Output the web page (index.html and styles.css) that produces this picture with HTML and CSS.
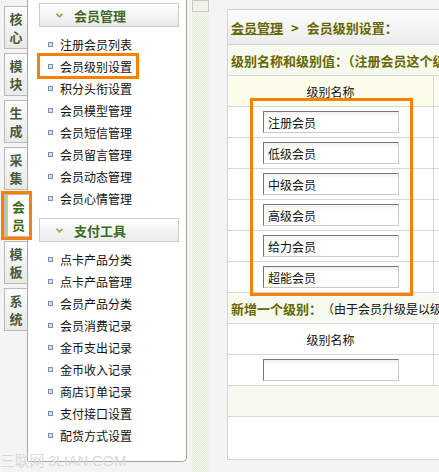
FILE: index.html
```html
<!DOCTYPE html>
<html lang="zh-CN">
<head>
<meta charset="utf-8">
<title>会员级别设置</title>
<link rel="stylesheet" href="styles.css">
</head>
<body>
<div class="page">
  <nav class="tabs">
    <div class="tab">核<br>心</div>
    <div class="tab">模<br>块</div>
    <div class="tab">生<br>成</div>
    <div class="tab">采<br>集</div>
    <div class="tab active">会<br>员</div>
    <div class="tab">模<br>板</div>
    <div class="tab">系<br>统</div>
  </nav>

  <aside class="sidebar">
    <div class="sec-head first"><svg class="chev" width="7" height="5" viewBox="0 0 7 5"><path d="M0.5 0.8 L3.5 3.8 L6.5 0.8" fill="none" stroke="#7fb252" stroke-width="1.6"/></svg>会员管理</div>
    <ul class="menu">
      <li><i></i>注册会员列表</li>
      <li class="hl"><i></i>会员级别设置</li>
      <li><i></i>积分头衔设置</li>
      <li><i></i>会员模型管理</li>
      <li><i></i>会员短信管理</li>
      <li><i></i>会员留言管理</li>
      <li><i></i>会员动态管理</li>
      <li><i></i>会员心情管理</li>
    </ul>
    <div class="sec-head"><svg class="chev" width="7" height="5" viewBox="0 0 7 5"><path d="M0.5 0.8 L3.5 3.8 L6.5 0.8" fill="none" stroke="#7fb252" stroke-width="1.6"/></svg>支付工具</div>
    <ul class="menu">
      <li><i></i>点卡产品分类</li>
      <li><i></i>点卡产品管理</li>
      <li><i></i>会员产品分类</li>
      <li><i></i>会员消费记录</li>
      <li><i></i>金币支出记录</li>
      <li><i></i>金币收入记录</li>
      <li><i></i>商店订单记录</li>
      <li><i></i>支付接口设置</li>
      <li><i></i>配货方式设置</li>
    </ul>
  </aside>

  <div class="splitter">
    <div class="strip"><div class="toggle"></div></div>
  </div>

  <main class="main">
    <div class="crumb"><a href="#">会员管理</a><span class="gt">&gt;</span>会员级别设置：</div>
    <div class="row note"><b>级别名称和级别值：（注册会员这个级别不能删除）</b></div>
    <div class="row thead"><div class="c1">级别名称</div><div class="c2"></div></div>
    <div class="row"><div class="c1"><input class="inp" value="注册会员"></div><div class="c2"></div></div>
    <div class="row"><div class="c1"><input class="inp" value="低级会员"></div><div class="c2"></div></div>
    <div class="row"><div class="c1"><input class="inp" value="中级会员"></div><div class="c2"></div></div>
    <div class="row"><div class="c1"><input class="inp" value="高级会员"></div><div class="c2"></div></div>
    <div class="row"><div class="c1"><input class="inp" value="给力会员"></div><div class="c2"></div></div>
    <div class="row"><div class="c1"><input class="inp" value="超能会员"></div><div class="c2"></div></div>
    <div class="row note"><b>新增一个级别：</b><span class="plain">（由于会员升级是以级别值来判断的）</span></div>
    <div class="row"><div class="c1 lbl">级别名称</div><div class="c2"></div></div>
    <div class="row"><div class="c1"><input class="inp" value=""></div><div class="c2"></div></div>
    <div class="row note"></div>
    <div class="blank"></div>
    <div class="mark"></div>
  </main>
</div>
<div class="watermark">三联网 3LIAN.COM</div>
</body>
</html>
```

FILE: styles.css
```css
html, body {
  margin: 0;
  padding: 0;
  overflow: hidden;
}
body {
  background: #f4f4f4;
  font-family: "Noto Sans CJK SC", "Liberation Sans", sans-serif;
  font-size: 12px;
  color: #111;
  width: 439px;
  height: 472px;
  position: relative;
}
.page {
  display: flex;
  align-items: flex-start;
  width: 700px;
}

/* left vertical tabs */
.tabs {
  width: 27px;
  flex: none;
  padding-top: 6px;
  display: flex;
  flex-direction: column;
  gap: 4px;
}
.tab {
  margin-left: 4px;
  width: 22px;
  height: 41px;
  border: 1px solid #b9b9b9;
  border-right: none;
  background: linear-gradient(#fbfbfb, #e9e9e9);
  color: #4a5838;
  font-weight: bold;
  font-size: 13px;
  line-height: 18px;
  text-align: center;
  display: flex;
  align-items: center;
  justify-content: center;
}
.tab.active {
  position: relative;
  z-index: 2;
  width: 21px;
  margin-right: -1px;
  padding-left: 3px;
  background: linear-gradient(90deg, #b6d48e 0 3px, #ffffff 3px);
  color: #3a6a16;
  outline: 3px solid #ff8000;
}

/* sidebar */
.sidebar {
  width: 158px;
  height: 461px;
  flex: none;
  background: #fff;
  border-left: 1px solid #a9a9a9;
  border-right: 1px solid #a3a392;
  border-bottom: 1px solid #a3a392;
  border-bottom-right-radius: 5px;
  box-sizing: content-box;
}
.sec-head {
  margin: 9px 0 0 11px;
  width: 138px;
  height: 22px;
  border: 1px solid #cbcbcb;
  background: linear-gradient(#ffffff, #ebebeb);
  display: flex;
  align-items: center;
  padding-left: 0;
  color: #3c6a1f;
  font-weight: bold;
  font-size: 13px;
}
.sec-head.first { margin-top: 3px; }
.chev {
  margin: 1px 11px 0 16px;
}
.menu {
  list-style: none;
  margin: 6px 0 0 0;
  padding: 0;
}
.menu li {
  margin-left: 11px;
  width: 89px;
  height: 22px;
  padding-left: 9px;
  display: flex;
  align-items: center;
  font-size: 12px;
  color: #111;
  white-space: nowrap;
}
.menu li i {
  width: 3px;
  height: 3px;
  border: 1px solid #7d8fb0;
  background: #d3e0f5;
  margin-right: 7px;
  flex: none;
}
.menu li.hl {
  outline: 3px solid #ff8000;
  outline-offset: -1px;
}

/* splitter */
.splitter {
  width: 40px;
  flex: none;
  height: 472px;
  padding-left: 5px;
  box-sizing: border-box;
}
.strip {
  width: 17px;
  height: 472px;
  background: repeating-conic-gradient(#e4efda 0 25%, #f6f8f3 0 50%) 0 0 / 2px 2px;
}
.toggle {
  width: 15px;
  height: 10px;
  border: 1px solid #c9c9c9;
  background: #eef3ea;
}

/* main panel */
.main {
  position: relative;
  margin-top: 9px;
  width: 300px;
  flex: none;
  background: #fff;
  border: 1px solid #d3d3d3;
}
.crumb {
  height: 34px;
  border-bottom: 1px solid #d3d3d3;
  background: linear-gradient(#fdfdfd, #ececec);
  display: flex;
  align-items: center;
  padding-left: 3px;
  color: #666600;
  font-weight: bold;
  font-size: 13px;
  white-space: nowrap;
}
.crumb a {
  color: #666600;
  text-decoration: underline;
}
.crumb .gt {
  margin: 0 8px 0 8px;
}
.row {
  display: flex;
  height: 30px;
  border-bottom: 1px solid #d6d6d6;
  white-space: nowrap;
}
.row.note {
  background: #f7faee;
  align-items: center;
  padding-left: 3px;
  color: #666600;
  font-size: 13px;
}
.row.note .plain {
  font-weight: normal;
  color: #111;
  font-size: 12px;
}
.row.thead {
  background: #fcfdeb;
}
.c1 {
  width: 205px;
  flex: none;
  border-right: 1px solid #d6d6d6;
  display: flex;
  align-items: center;
  justify-content: center;
  font-size: 12px;
  color: #111;
}
.c2 {
  flex: 1;
}
.inp {
  width: 126px;
  height: 20px;
  margin: 0 0 0 1px;
  padding: 0 4px;
  border: 1px solid;
  border-color: #767676 #cacaca #cacaca #767676;
  background: linear-gradient(#f0f0f0, #ffffff 5px);
  font-family: "Noto Sans CJK SC", sans-serif;
  font-size: 12px;
  color: #111;
  box-sizing: content-box;
}
.blank {
  height: 42px;
}
.mark {
  position: absolute;
  left: 22px;
  top: 88px;
  width: 157px;
  height: 192px;
  border: 3px solid #ff8000;
  pointer-events: none;
}

.watermark {
  position: absolute;
  left: 0;
  top: 449px;
  font-family: "Liberation Sans", "Noto Sans CJK SC", sans-serif;
  font-size: 15px;
  color: #dadada;
  letter-spacing: -0.3px;
  white-space: nowrap;
}
```
